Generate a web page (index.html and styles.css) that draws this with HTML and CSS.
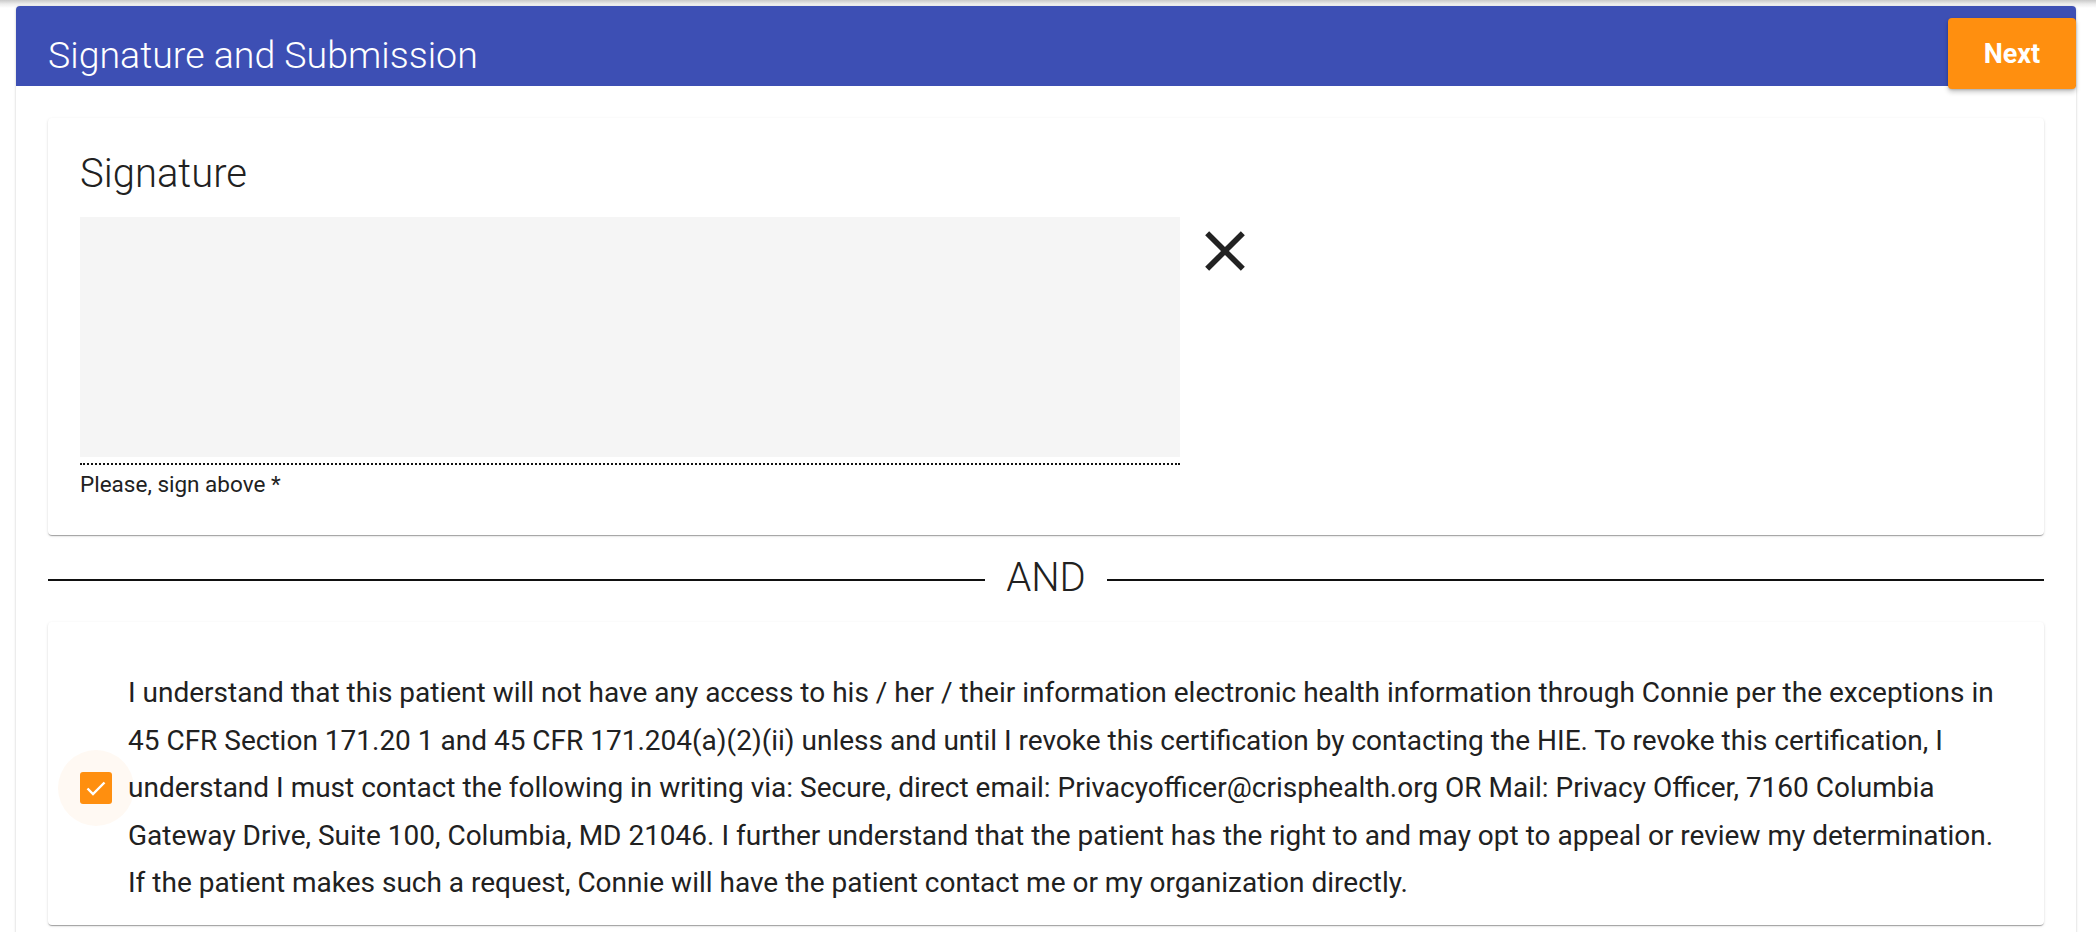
FILE: index.html
```html
<!DOCTYPE html>
<html lang="en">
<head>
<meta charset="utf-8">
<title>Signature and Submission</title>
<link rel="stylesheet" href="styles.css">
</head>
<body>
<div class="page">
  <header class="bar">
    <h1 class="bar-title">Signature and Submission</h1>
    <button class="next-btn" type="button">Next</button>
  </header>
  <div class="content">
    <section class="card sig-card">
      <h2 class="card-title">Signature</h2>
      <div class="sig-row">
        <div class="sig-field">
          <div class="sig-pad"></div>
          <div class="sig-line"></div>
          <div class="sig-label">Please, sign above *</div>
        </div>
        <button class="clear-btn" type="button" aria-label="Clear signature">
          <svg class="clear-icon" viewBox="0 0 24 24" width="68" height="68"><path d="M19 6.41L17.59 5 12 10.59 6.41 5 5 6.41 10.59 12 5 17.59 6.41 19 12 13.41 17.59 19 19 17.59 13.41 12z" fill="#222"/></svg>
        </button>
      </div>
    </section>

    <div class="divider">
      <span class="divider-line"></span>
      <span class="divider-text">AND</span>
      <span class="divider-line"></span>
    </div>

    <section class="card consent-card">
      <label class="consent">
        <span class="check-halo">
          <span class="check">
            <svg viewBox="0 0 32 32" width="32" height="32"><polyline points="7.5,16.5 13,22 24.5,10.5" fill="none" stroke="#fff" stroke-width="2.4"/></svg>
          </span>
        </span>
        <span class="consent-text">I understand that this patient will not have any access to his / her / their information electronic health information through Connie per the exceptions in 45 CFR Section 171.20 1 and 45 CFR 171.204(a)(2)(ii) unless and until I revoke this certification by contacting the HIE. To revoke this certification, I understand I must contact the following in writing via: Secure, direct email: Privacyofficer@crisphealth.org OR Mail: Privacy Officer, 7160 Columbia Gateway Drive, Suite 100, Columbia, MD 21046. I further understand that the patient has the right to and may opt to appeal or review my determination. If the patient makes such a request, Connie will have the patient contact me or my organization directly.</span>
      </label>
    </section>
  </div>
</div>
</body>
</html>
```

FILE: styles.css
```css
* { box-sizing: border-box; }

html, body {
  margin: 0;
  padding: 0;
  height: 100%;
  overflow: hidden;
}

body {
  font-family: Roboto, "Noto Sans", Arial, sans-serif;
  color: #212121;
  background: linear-gradient(to bottom, #c9c9c9 0px, #ececec 4px, #ffffff 8px) no-repeat, #ffffff;
}

.page {
  margin: 6px 20px 0 16px;
  background: #fff;
  border-radius: 4px 4px 0 0;
  box-shadow: 0 1px 3px rgba(0,0,0,0.18), 0 0 1px rgba(0,0,0,0.12);
  min-height: 960px;
}

.bar {
  height: 80px;
  background: #3d4fb4;
  border-radius: 4px 4px 0 0;
  display: flex;
  align-items: flex-start;
  justify-content: space-between;
  padding-left: 32px;
}

.bar-title {
  margin: 0;
  padding-top: 29px;
  font-size: 37.5px;
  font-weight: 300;
  color: #fff;
  line-height: 40px;
  letter-spacing: 0;
}

.next-btn {
  margin-top: 12px;
  width: 128px;
  height: 71px;
  border: 0;
  border-radius: 4px;
  background: #ff8f0f;
  color: #fff;
  font-family: Roboto, Arial, sans-serif;
  font-size: 27px;
  font-weight: 700;
  box-shadow: 0 3px 5px rgba(0,0,0,0.22), 0 1px 2px rgba(0,0,0,0.15);
  cursor: pointer;
}

.content {
  padding: 32px 32px 0 32px;
}

.card {
  background: #fff;
  border-radius: 4px;
  box-shadow: 0 2px 1px -1px rgba(0,0,0,0.2), 0 1px 1px 0 rgba(0,0,0,0.14), 0 1px 3px 0 rgba(0,0,0,0.12);
}

.sig-card {
  padding: 32px 32px 38px 32px;
}

.card-title {
  margin: 0 0 20px 0;
  font-size: 40px;
  font-weight: 300;
  line-height: 47px;
  color: #212121;
}

.sig-row {
  display: flex;
  align-items: flex-start;
}

.sig-field {
  width: 1100px;
}

.sig-pad {
  height: 240px;
  background: #f5f5f5;
}

.sig-line {
  margin-top: 6px;
  border-top: 2px dotted #111;
}

.sig-label {
  margin-top: 6px;
  font-size: 22.5px;
  line-height: 26px;
  color: #212121;
}

.clear-btn {
  margin-left: 11px;
  padding: 0;
  border: 0;
  background: transparent;
  width: 68px;
  height: 68px;
  cursor: pointer;
}

.clear-icon {
  display: block;
}

.divider {
  display: flex;
  align-items: center;
  margin: 19px 0 21px 0;
}

.divider-line {
  flex: 1;
  height: 2px;
  margin-top: 5px;
  background: #111;
}

.divider-text {
  margin: 0 21px;
  font-size: 40px;
  font-weight: 300;
  line-height: 47px;
  color: #212121;
}

.consent-card {
  padding: 47px 48px 18px 32px;
}

.consent {
  display: flex;
  align-items: center;
}

.check-halo {
  flex: none;
  width: 76px;
  height: 76px;
  margin-left: -22px;
  margin-right: -6px;
  border-radius: 50%;
  background: rgba(255, 143, 15, 0.05);
  display: flex;
  align-items: center;
  justify-content: center;
}

.check {
  width: 32px;
  height: 32px;
  border-radius: 3px;
  background: #ff8f0f;
  display: flex;
  align-items: center;
  justify-content: center;
}

.check svg {
  display: block;
}

.consent-text {
  font-size: 28px;
  line-height: 47.5px;
  color: #212121;
}
```
